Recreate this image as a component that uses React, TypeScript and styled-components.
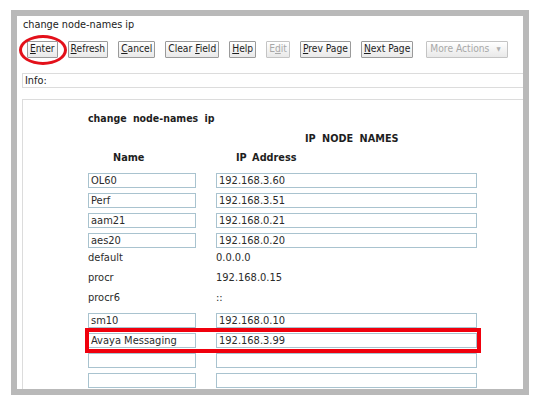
import React from "react";
import styled, { createGlobalStyle, css } from "styled-components";

const FONT = '"DejaVu Sans Condensed", "DejaVu Sans", Verdana, sans-serif';

const Global = createGlobalStyle`
  html, body { margin: 0; padding: 0; background: #ffffff; }
  body { font-family: ${FONT}; color: #2b2b2b; }
`;

const Frame = styled.div`
  margin: 10px 0 0 11px;
  width: 506px;
  height: 373px;
  border: 6px solid #b9b9b9;
  background: #ffffff;
  overflow: hidden;
`;

const Title = styled.div`
  margin-top: 2px;
  padding-left: 6px;
  font-size: 10.8px;
  line-height: 14px;
  color: #222;
`;

const Toolbar = styled.div`
  display: flex;
  align-items: center;
  gap: 10px;
  margin-top: 8px;
  padding-left: 10px;
  height: 18px;
`;

const Button = styled.button<{ $disabled?: boolean; $circled?: boolean; $wide?: boolean }>`
  position: relative;
  flex-shrink: 0;
  white-space: nowrap;
  box-sizing: border-box;
  height: 17px;
  padding: 0 2px;
  margin: 0;
  font-family: ${FONT};
  font-size: 10.2px;
  line-height: 14px;
  color: ${(p) => (p.$disabled ? "#a8a8a8" : "#1e1e1e")};
  border: 1px solid ${(p) => (p.$disabled ? "#c4c4c4" : "#9a9a9a")};
  border-radius: 1px;
  background: linear-gradient(#ffffff, #e9e9e9);
  display: flex;
  align-items: center;
  gap: 7px;
  ${(p) =>
    p.$wide &&
    css`
      margin-left: 3px;
      padding: 0 6px 0 3px;
    `}
  ${(p) =>
    p.$circled &&
    css`
      &::after {
        content: "";
        position: absolute;
        left: -9px;
        top: -7px;
        width: 48px;
        height: 30px;
        box-sizing: border-box;
        border: 3.5px solid #e3101a;
        border-radius: 50%;
      }
    `}
`;

const Key = styled.span`
  text-decoration: underline;
`;

const Caret = styled.span`
  font-size: 6px;
  color: #b0b0b0;
`;

const InfoBar = styled.div`
  box-sizing: border-box;
  margin: 15px 0 0 5px;
  width: 540px;
  height: 15px;
  border: 1px solid #dcdcdc;
  padding-left: 2px;
  font-size: 10.8px;
  line-height: 13px;
  color: #222;
`;

const Panel = styled.div`
  box-sizing: border-box;
  margin: 11px 0 0 5px;
  width: 540px;
  height: 320px;
  border: 1px solid #dcdcdc;
  padding: 11px 0 0 65px;
`;

const PanelTitle = styled.div`
  font-size: 10.5px;
  font-weight: bold;
  line-height: 14px;
  word-spacing: 3px;
  color: #1e1e1e;
`;

const SectionHeading = styled.div`
  margin-top: 7px;
  padding-left: 217px;
  font-size: 10.8px;
  font-weight: bold;
  line-height: 14px;
  word-spacing: 3px;
  color: #1e1e1e;
`;

const Grid = styled.div`
  display: grid;
  grid-template-columns: 108px 261px;
  column-gap: 20px;
`;

const HeaderRow = styled(Grid)`
  margin-top: 5px;
  margin-bottom: 5px;
  font-size: 10.8px;
  font-weight: bold;
  line-height: 14px;
  word-spacing: 2px;
  color: #1e1e1e;
`;

const HeaderCell = styled.div<{ $indent: number }>`
  padding-left: ${(p) => p.$indent}px;
`;

const Row = styled(Grid)<{ $highlight?: boolean }>`
  position: relative;
  height: 20px;
  align-items: center;
  ${(p) =>
    p.$highlight &&
    css`
      &::after {
        content: "";
        position: absolute;
        left: -3px;
        top: -2px;
        width: 396px;
        height: 25px;
        box-sizing: border-box;
        border: 4px solid #f0000d;
      }
    `}
`;

const Field = styled.div`
  box-sizing: border-box;
  height: 15px;
  border: 1px solid #a9c3cf;
  background: #fff;
  padding-left: 2px;
  font-size: 11px;
  line-height: 13px;
  color: #2b2b2b;
  white-space: nowrap;
  overflow: hidden;
`;

const Plain = styled.div`
  font-size: 11px;
  line-height: 14px;
  padding-bottom: 4px;
  color: #2b2b2b;
`;

type Entry = { name: string; ip: string; editable: boolean; highlight?: boolean };

const entries: Entry[] = [
  { name: "OL60", ip: "192.168.3.60", editable: true },
  { name: "Perf", ip: "192.168.3.51", editable: true },
  { name: "aam21", ip: "192.168.0.21", editable: true },
  { name: "aes20", ip: "192.168.0.20", editable: true },
  { name: "default", ip: "0.0.0.0", editable: false },
  { name: "procr", ip: "192.168.0.15", editable: false },
  { name: "procr6", ip: "::", editable: false },
  { name: "sm10", ip: "192.168.0.10", editable: true },
  { name: "Avaya Messaging", ip: "192.168.3.99", editable: true, highlight: true },
  { name: "", ip: "", editable: true },
  { name: "", ip: "", editable: true },
];

export default function App() {
  return (
    <>
      <Global />
      <Frame>
        <Title>change node-names ip</Title>
        <Toolbar>
          <Button $circled>
            <span>
              <Key>E</Key>nter
            </span>
          </Button>
          <Button>
            <span>
              <Key>R</Key>efresh
            </span>
          </Button>
          <Button>
            <span>
              <Key>C</Key>ancel
            </span>
          </Button>
          <Button>
            <span>
              Clear <Key>F</Key>ield
            </span>
          </Button>
          <Button>
            <span>
              <Key>H</Key>elp
            </span>
          </Button>
          <Button $disabled>
            <span>
              E<Key>d</Key>it
            </span>
          </Button>
          <Button>
            <span>
              <Key>P</Key>rev Page
            </span>
          </Button>
          <Button>
            <span>
              <Key>N</Key>ext Page
            </span>
          </Button>
          <Button $disabled $wide>
            <span>More Actions</span>
            <Caret>▼</Caret>
          </Button>
        </Toolbar>
        <InfoBar>Info:</InfoBar>
        <Panel>
          <PanelTitle>change node-names ip</PanelTitle>
          <SectionHeading>IP NODE NAMES</SectionHeading>
          <HeaderRow>
            <HeaderCell $indent={25}>Name</HeaderCell>
            <HeaderCell $indent={20}>IP Address</HeaderCell>
          </HeaderRow>
          {entries.map((e, i) => (
            <Row key={i} $highlight={e.highlight}>
              {e.editable ? (
                <>
                  <Field>{e.name}</Field>
                  <Field>{e.ip}</Field>
                </>
              ) : (
                <>
                  <Plain>{e.name}</Plain>
                  <Plain>{e.ip}</Plain>
                </>
              )}
            </Row>
          ))}
        </Panel>
      </Frame>
    </>
  );
}
